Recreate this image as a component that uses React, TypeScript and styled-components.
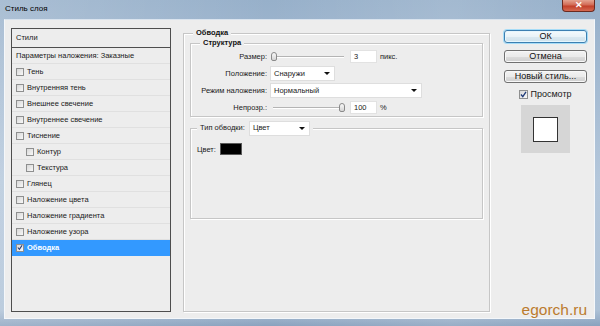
import styled, { createGlobalStyle } from 'styled-components';

const GlobalStyle = createGlobalStyle`
  html, body {
    margin: 0;
    padding: 0;
  }
  body {
    width: 600px;
    height: 326px;
    overflow: hidden;
    font-family: "Liberation Sans", Arial, sans-serif;
    color: #1a1a1a;
  }
`;

const Window = styled.div`
  width: 600px;
  height: 326px;
  box-sizing: border-box;
  display: flex;
  flex-direction: column;
  padding: 0 5px 7px 4px;
  background:
    linear-gradient(90deg, rgba(255, 255, 255, 0.18), rgba(255, 255, 255, 0) 45%, rgba(255, 255, 255, 0.12) 75%, rgba(255, 255, 255, 0)),
    linear-gradient(180deg, #97b0ca 0%, #b4c7db 55%, #aec2d7 95%, #8aa2be 100%);
`;

const TitleBar = styled.div`
  height: 19px;
  display: flex;
  justify-content: space-between;
  align-items: flex-start;
`;

const Title = styled.span`
  font-size: 8px;
  line-height: 18px;
  padding-left: 1px;
  color: #000;
`;

const CloseButton = styled.div`
  width: 33px;
  height: 12px;
  box-sizing: border-box;
  border: 1px solid #6b2a20;
  border-top: none;
  border-radius: 0 0 4px 4px;
  background: linear-gradient(180deg, #e4a391 0%, #d26a55 45%, #c2402a 55%, #d56a52 100%);
  display: flex;
  align-items: center;
  justify-content: center;
  color: #fff;
  font-size: 9px;
  font-weight: bold;
  line-height: 1;
`;

const Client = styled.div`
  flex: 1;
  display: flex;
  align-items: stretch;
  padding: 8px 7px 6px 6px;
  border: 1px solid #f4f7fa;
  border-top-color: #d9e3ee;
  background: #ededed;
  min-height: 0;
`;

const StyleList = styled.div`
  width: 160px;
  box-sizing: border-box;
  border: 1px solid #4e4e4e;
  display: flex;
  flex-direction: column;
`;

const ListHeader = styled.div`
  height: 19px;
  box-sizing: border-box;
  border-bottom: 1px solid #4e4e4e;
  padding-left: 4px;
  font-size: 7.5px;
  line-height: 18px;
`;

const ListRow = styled.div<{ $indent?: boolean; $selected?: boolean }>`
  height: 16px;
  box-sizing: border-box;
  border-bottom: 1px solid ${(p) => (p.$selected ? '#3399ff' : '#e0e0e0')};
  display: flex;
  align-items: center;
  gap: 3px;
  padding-left: ${(p) => (p.$indent ? '14px' : '4px')};
  font-size: 7.5px;
  background: ${(p) => (p.$selected ? '#3399ff' : 'transparent')};
  color: ${(p) => (p.$selected ? '#fff' : '#1a1a1a')};
  font-weight: ${(p) => (p.$selected ? 'bold' : 'normal')};
`;

const Box = styled.span<{ $size?: number }>`
  width: ${(p) => p.$size ?? 8}px;
  height: ${(p) => p.$size ?? 8}px;
  box-sizing: border-box;
  border: 1px solid #8e8f8f;
  background: linear-gradient(135deg, #d8d8d8, #f8f8f8);
  display: inline-flex;
  align-items: center;
  justify-content: center;
  flex-shrink: 0;
`;

const Check = ({ checked, size }: { checked?: boolean; size?: number }) => (
  <Box $size={size}>
    {checked && (
      <svg width="7" height="7" viewBox="0 0 7 7">
        <path d="M1 3.5 L2.8 5.6 L6 0.8" fill="none" stroke="#1f3a78" strokeWidth="1.3" />
      </svg>
    )}
  </Box>
);

const Group = styled.fieldset<{ $w?: number; $h?: number; $mt?: number }>`
  margin: ${(p) => p.$mt ?? 0}px 0 0 0;
  min-width: 0;
  box-sizing: border-box;
  ${(p) => (p.$w ? `width: ${p.$w}px;` : '')}
  ${(p) => (p.$h ? `height: ${p.$h}px;` : '')}
  border: 1px solid #c6c6c6;
  box-shadow: inset 1px 1px 0 #fff, 1px 1px 0 #fff;
  padding: 0 6px;
`;

const Legend = styled.legend`
  font-size: 7.5px;
  font-weight: bold;
  line-height: 10px;
  padding: 0 3px;
  margin-left: 3px;
  background: #ededed;
  color: #111;
`;

const TypeLegend = styled.legend`
  display: flex;
  align-items: center;
  gap: 4px;
  font-size: 7.5px;
  line-height: 16px;
  padding: 0 3px;
  margin-left: 0;
  background: #ededed;
`;

const Form = styled.div`
  display: grid;
  grid-template-columns: 70px 1fr;
  grid-auto-rows: 16px;
  row-gap: 1px;
  column-gap: 3px;
  align-items: center;
  padding-bottom: 1px;
  font-size: 7.5px;
`;

const Label = styled.span`
  text-align: right;
`;

const Controls = styled.div`
  display: flex;
  align-items: center;
  gap: 6px;
`;

const Track = styled.div`
  position: relative;
  width: 74px;
  height: 11px;
  flex-shrink: 0;
  &::before {
    content: '';
    position: absolute;
    left: 3px;
    right: 0;
    top: 5px;
    height: 1px;
    background: #b4b4b4;
    box-shadow: 0 1px 0 #fff;
  }
`;

const Thumb = styled.div`
  position: absolute;
  top: 1px;
  width: 6px;
  height: 9px;
  box-sizing: border-box;
  border: 1px solid #8a8a8a;
  border-radius: 3px 3px 2px 2px;
  background: linear-gradient(180deg, #fafafa, #d4d4d4);
`;

const Slider = ({ value }: { value: number }) => (
  <Track>
    <Thumb style={{ left: `${1 + (value / 100) * 68}px` }} />
  </Track>
);

const Field = styled.div`
  width: 27px;
  height: 13px;
  box-sizing: border-box;
  background: #fff;
  border: 1px solid #e2e2e2;
  padding-left: 3px;
  line-height: 11px;
`;

const Unit = styled.span`
  margin-left: -3px;
`;

const Select = styled.div<{ $w: number }>`
  width: ${(p) => p.$w}px;
  height: 15px;
  box-sizing: border-box;
  background: #fff;
  border: 1px solid #dedede;
  padding: 0 4px 0 3px;
  display: flex;
  align-items: center;
  justify-content: space-between;
  font-size: 7.5px;
  font-weight: normal;
  &::after {
    content: '';
    border-left: 3px solid transparent;
    border-right: 3px solid transparent;
    border-top: 3px solid #111;
  }
`;

const ColorRow = styled.div`
  margin-top: 7px;
  display: flex;
  align-items: center;
  gap: 4px;
  font-size: 7.5px;
`;

const Swatch = styled.div`
  width: 22px;
  height: 12px;
  box-sizing: border-box;
  border: 1px solid #5a5a5a;
  background: #000;
`;

const Side = styled.div`
  width: 83px;
  display: flex;
  flex-direction: column;
  align-items: center;
  padding-top: 2px;
`;

const Button = styled.div<{ $primary?: boolean }>`
  width: 100%;
  height: 13px;
  box-sizing: border-box;
  margin-bottom: 7px;
  border: 1px solid ${(p) => (p.$primary ? '#3c7fb1' : '#707070')};
  border-radius: 3px;
  background: ${(p) =>
    p.$primary
      ? 'linear-gradient(180deg, #f4fafd 0%, #e9f3f8 50%, #dbe9f1 51%, #cfe2ec 100%)'
      : 'linear-gradient(180deg, #f2f2f2 0%, #ebebeb 50%, #dddddd 51%, #cfcfcf 100%)'};
  box-shadow: ${(p) => (p.$primary ? '0 0 0 1px #a6dcf7, inset 0 0 0 1px #e6f6fd' : 'inset 0 0 0 1px #f8f8f8')};
  font-size: 9px;
  line-height: 11px;
  text-align: center;
  color: #111;
`;

const PreviewToggle = styled.div`
  display: flex;
  align-items: center;
  gap: 2px;
  margin-top: -1px;
  font-size: 9px;
  line-height: 11px;
`;

const Preview = styled.div`
  margin-top: 5px;
  width: 49px;
  height: 48px;
  background: #d6d6d6;
  display: flex;
  align-items: center;
  justify-content: center;
`;

const PreviewSquare = styled.div`
  width: 25px;
  height: 25px;
  box-sizing: border-box;
  border: 1px solid #333;
  background: #fff;
`;

const Watermark = styled.div`
  margin-top: auto;
  margin-bottom: -5px;
  align-self: flex-end;
  font-size: 15.5px;
  line-height: 15px;
  color: #bb7b2e;
`;

const effects: { name: string; indent?: boolean; checked?: boolean }[] = [
  { name: 'Тень' },
  { name: 'Внутренняя тень' },
  { name: 'Внешнее свечение' },
  { name: 'Внутреннее свечение' },
  { name: 'Тиснение' },
  { name: 'Контур', indent: true },
  { name: 'Текстура', indent: true },
  { name: 'Глянец' },
  { name: 'Наложение цвета' },
  { name: 'Наложение градиента' },
  { name: 'Наложение узора' },
  { name: 'Обводка', checked: true },
];

export default function App() {
  return (
    <>
      <GlobalStyle />
      <Window>
        <TitleBar>
          <Title>Стиль слоя</Title>
          <CloseButton>✕</CloseButton>
        </TitleBar>
        <Client>
          <StyleList>
            <ListHeader>Стили</ListHeader>
            <ListRow>Параметры наложения: Заказные</ListRow>
            {effects.map((e) => (
              <ListRow key={e.name} $indent={e.indent} $selected={e.checked}>
                <Check checked={e.checked} />
                {e.name}
              </ListRow>
            ))}
          </StyleList>

          <Group $w={307} style={{ marginLeft: 12 }}>
            <Legend>Обводка</Legend>
            <Group>
              <Legend>Структура</Legend>
              <Form>
                <Label>Размер:</Label>
                <Controls>
                  <Slider value={0} />
                  <Field>3</Field>
                  <Unit>пикс.</Unit>
                </Controls>
                <Label>Положение:</Label>
                <Controls>
                  <Select $w={65}>Снаружи</Select>
                </Controls>
                <Label>Режим наложения:</Label>
                <Controls>
                  <Select $w={152}>Нормальный</Select>
                </Controls>
                <Label>Непрозр.:</Label>
                <Controls>
                  <Slider value={100} />
                  <Field>100</Field>
                  <Unit>%</Unit>
                </Controls>
              </Form>
            </Group>
            <Group $h={99} $mt={3}>
              <TypeLegend>
                Тип обводки:
                <Select $w={61}>Цвет</Select>
              </TypeLegend>
              <ColorRow>
                Цвет:
                <Swatch />
              </ColorRow>
            </Group>
          </Group>

          <Side style={{ marginLeft: 14 }}>
            <Button $primary>ОК</Button>
            <Button>Отмена</Button>
            <Button>Новый стиль...</Button>
            <PreviewToggle>
              <Check checked size={9} />
              Просмотр
            </PreviewToggle>
            <Preview>
              <PreviewSquare />
            </Preview>
            <Watermark>egorch.ru</Watermark>
          </Side>
        </Client>
      </Window>
    </>
  );
}
